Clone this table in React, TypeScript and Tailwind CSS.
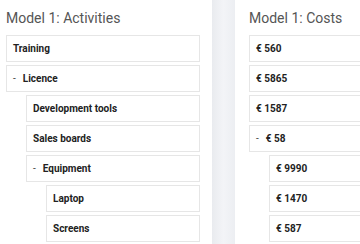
import React from 'react';

type Row = { label: string; depth: number; open?: boolean };

const activities: Row[] = [
  { label: 'Training', depth: 0 },
  { label: 'Licence', depth: 0, open: true },
  { label: 'Development tools', depth: 1 },
  { label: 'Sales boards', depth: 1 },
  { label: 'Equipment', depth: 1, open: true },
  { label: 'Laptop', depth: 2 },
  { label: 'Screens', depth: 2 },
];

const costs: Row[] = [
  { label: '€ 560', depth: 0 },
  { label: '€ 5865', depth: 0 },
  { label: '€ 1587', depth: 0 },
  { label: '€ 58', depth: 0, open: true },
  { label: '€ 9990', depth: 1 },
  { label: '€ 1470', depth: 1 },
  { label: '€ 587', depth: 1 },
];

const indent = ['ml-0', 'ml-[20px]', 'ml-[40px]'];

function TreeRow({ row }: { row: Row }) {
  return (
    <div
      className={`${indent[row.depth]} flex h-[27px] items-center gap-[7px] border border-[#e6e6e6] bg-white px-[6px] text-[10px] font-bold text-[#222]`}
    >
      {row.open && <span className="text-[10px] font-normal text-[#444]">-</span>}
      <span>{row.label}</span>
    </div>
  );
}

function Panel({ title, rows, className }: { title: string; rows: Row[]; className: string }) {
  return (
    <div className={`flex flex-col bg-white pt-[9px] ${className}`}>
      <h2 className="mb-[8px] text-[14px] leading-[18px] font-normal text-[#555]">{title}</h2>
      <div className="flex flex-col gap-[3px]">
        {rows.map((r) => (
          <TreeRow key={r.label} row={r} />
        ))}
      </div>
    </div>
  );
}

export default function App() {
  return (
    <div className="flex h-[244px] w-[360px] overflow-hidden bg-white" style={{ fontFamily: 'Roboto, sans-serif' }}>
      <Panel title="Model 1: Activities" rows={activities} className="w-[212px] shrink-0 pr-[12px] pl-[6px]" />
      <div className="w-[23px] shrink-0 bg-gradient-to-r from-[#e9ebef] via-[#f3f4f7] to-[#eceef2]" />
      <Panel title="Model 1: Costs" rows={costs} className="w-[320px] min-w-[320px] shrink-0 pl-[14px]" />
    </div>
  );
}
